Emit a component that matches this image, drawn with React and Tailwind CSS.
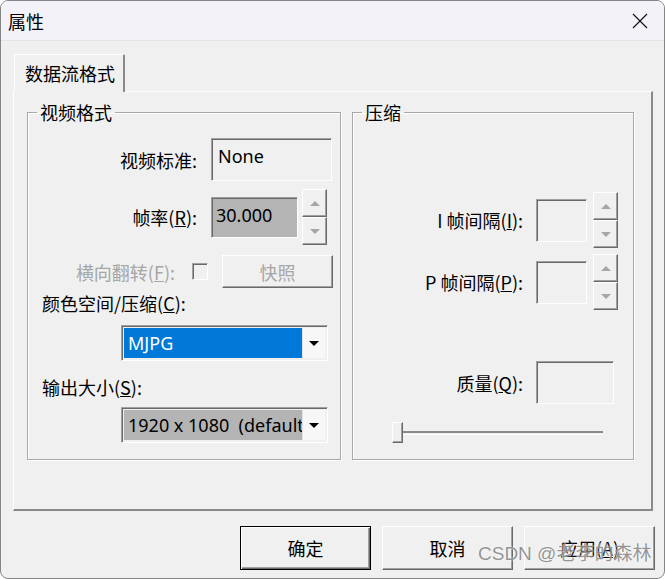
import React from "react";

const Up = () => (
  <svg width="10" height="5" viewBox="0 0 10 5">
    <polygon points="0,5 5,0 10,5" fill="#a6a6a6" />
  </svg>
);

const Down = () => (
  <svg width="10" height="5" viewBox="0 0 10 5">
    <polygon points="0,0 10,0 5,5" fill="#a6a6a6" />
  </svg>
);

const Spin = () => (
  <div className="flex flex-col w-[25px] h-[56px]">
    <div className="flex-1 flex items-center justify-center border border-t-white border-l-white border-r-[#696969] border-b-[#696969] shadow-[inset_-1px_-1px_0_#a0a0a0]">
      <Up />
    </div>
    <div className="flex-1 flex items-center justify-center border border-t-white border-l-white border-r-[#696969] border-b-[#696969] shadow-[inset_-1px_-1px_0_#a0a0a0]">
      <Down />
    </div>
  </div>
);

const sunken =
  "border border-t-[#a0a0a0] border-l-[#a0a0a0] border-r-white border-b-white shadow-[inset_1px_1px_0_#696969]";

const Combo = ({ value, selected }) => (
  <div className={`w-[207px] h-[36px] p-[2px] flex ${sunken}`}>
    <div
      className={`flex-1 flex items-center pl-[4px] overflow-hidden whitespace-pre font-['Noto_Sans',sans-serif] ${
        selected ? "bg-[#0078d7] text-white" : "bg-[#b4b4b4] text-black"
      }`}
    >
      {value}
    </div>
    <div className="w-[23px] shrink-0 flex items-center justify-center bg-[#f7f7f7] border-l border-[#e0e0e0]">
      <svg width="10" height="5" viewBox="0 0 10 5">
        <polygon points="0,0 10,0 5,5" fill="#000" />
      </svg>
    </div>
  </div>
);

const Btn = ({ children, primary }) => (
  <button
    className={`w-[131px] h-[44px] flex items-center justify-center bg-[#f0f0f0] ${
      primary
        ? "border border-black shadow-[inset_1px_1px_0_#fff,inset_-1px_-1px_0_#696969,inset_-2px_-2px_0_#a0a0a0]"
        : "border border-t-white border-l-white border-r-[#696969] border-b-[#696969] shadow-[inset_-1px_-1px_0_#a0a0a0]"
    }`}
  >
    {children}
  </button>
);

export default function App() {
  return (
    <div className="w-[665px] h-[579px] bg-white">
      <div className="relative w-[665px] h-[579px] flex flex-col overflow-hidden rounded-[8px] border border-[#858585] bg-[#f0f0f0] text-[18px] leading-[20px] text-black font-['Noto_Sans_CJK_SC',sans-serif]">
        {/* title bar */}
        <div className="h-[40px] shrink-0 flex items-center justify-between pl-[7px] pr-[16px] bg-[#f3f2f8] border-b border-[#e4e4e8]">
          <span>属性</span>
          <svg width="16" height="16" viewBox="0 0 16 16">
            <path d="M1 1 L15 15 M15 1 L1 15" stroke="#111" strokeWidth="1.2" />
          </svg>
        </div>

        <div className="flex flex-col pl-[12px] pr-[11px] pt-[13px]">
          {/* tab */}
          <div className="relative z-10 -mb-px ml-[1px] w-[111px] h-[38px] pl-[10px] pt-[8px] bg-[#f0f0f0] rounded-t-[2px] border-t border-l border-r-2 border-t-white border-l-white border-r-[#8a8a8a]">
            数据流格式
          </div>

          {/* panel */}
          <div className="h-[420px] flex gap-[11px] pl-[13px] pt-[10px] border-t border-l border-white border-r-2 border-b-2 border-r-[#8a8a8a] border-b-[#8a8a8a]">
            <fieldset className="w-[314px] h-[358px] border border-[#a8a8a8] shadow-[inset_1px_1px_0_#fff,1px_1px_0_#fff]">
              <legend className="ml-[9px] px-[3px] leading-[20px]">视频格式</legend>
              <div className="flex flex-col pt-[16px]">
                <div className="flex items-center">
                  <div className="w-[169px] text-right">视频标准:</div>
                  <div className={`ml-[14px] w-[121px] h-[43px] pl-[6px] pt-[7px] font-['Noto_Sans',sans-serif] ${sunken}`}>
                    None
                  </div>
                </div>
                <div className="mt-[8px] flex items-center">
                  <div className="w-[169px] text-right">
                    帧率(<u>R</u>):
                  </div>
                  <div className={`ml-[14px] w-[87px] h-[41px] pl-[4px] pt-[7px] bg-[#b4b4b4] font-['Noto_Sans',sans-serif] ${sunken}`}>
                    30.000
                  </div>
                  <div className="ml-[4px]">
                    <Spin />
                  </div>
                </div>
                <div className="mt-[10px] flex items-center text-[#a6a6a6]">
                  <div className="w-[147px] text-right">
                    横向翻转(<u>F</u>):
                  </div>
                  <div className={`ml-[17px] w-[16px] h-[17px] ${sunken}`} />
                  <div className="ml-[14px] w-[111px] h-[33px] flex items-center justify-center border border-t-white border-l-white border-r-[#696969] border-b-[#696969] shadow-[inset_-1px_-1px_0_#a0a0a0]">
                    快照
                  </div>
                </div>
                <div className="mt-[5px] ml-[14px]">
                  颜色空间/压缩(<u>C</u>):
                </div>
                <div className="mt-[12px] ml-[93px]">
                  <Combo value="MJPG" selected />
                </div>
                <div className="mt-[16px] ml-[14px]">
                  输出大小(<u>S</u>):
                </div>
                <div className="mt-[10px] ml-[93px]">
                  <Combo value="1920 x 1080  (default)" />
                </div>
              </div>
            </fieldset>

            <fieldset className="w-[282px] h-[358px] border border-[#a8a8a8] shadow-[inset_1px_1px_0_#fff,1px_1px_0_#fff]">
              <legend className="ml-[9px] px-[3px] leading-[20px]">压缩</legend>
              <div className="flex flex-col pt-[70px]">
                <div className="flex items-center">
                  <div className="w-[170px] text-right">
                    I 帧间隔(<u>I</u>):
                  </div>
                  <div className={`ml-[13px] w-[51px] h-[43px] ${sunken}`} />
                  <div className="ml-[6px]">
                    <Spin />
                  </div>
                </div>
                <div className="mt-[6px] flex items-center">
                  <div className="w-[170px] text-right">
                    P 帧间隔(<u>P</u>):
                  </div>
                  <div className={`ml-[13px] w-[51px] h-[43px] ${sunken}`} />
                  <div className="ml-[6px]">
                    <Spin />
                  </div>
                </div>
                <div className="mt-[51px] flex items-center">
                  <div className="w-[170px] text-right">
                    质量(<u>Q</u>):
                  </div>
                  <div className={`ml-[13px] w-[78px] h-[43px] ${sunken}`} />
                </div>
                <div className="mt-[18px] ml-[39px] flex items-center h-[21px]">
                  <div className="w-[11px] h-[21px] border border-t-white border-l-white border-r-[#696969] border-b-[#696969] shadow-[inset_-1px_-1px_0_#a0a0a0]" />
                  <div className="w-[200px] h-[4px] border-t-2 border-[#8a8a8a] border-b border-b-white" />
                </div>
              </div>
            </fieldset>
          </div>

          {/* buttons */}
          <div className="mt-[15px] -mr-[2px] flex justify-end gap-[11px]">
            <Btn primary>确定</Btn>
            <Btn>取消</Btn>
            <Btn>
              应用(<u>A</u>)
            </Btn>
          </div>
        </div>

        <div className="absolute left-[477px] top-[542px] text-[19px] leading-[22px] text-[rgba(130,130,130,0.85)] [text-shadow:0_0_2px_#fff] font-['Liberation_Sans','Noto_Sans_CJK_SC',sans-serif]">
          CSDN @老李的森林
        </div>
      </div>
    </div>
  );
}
